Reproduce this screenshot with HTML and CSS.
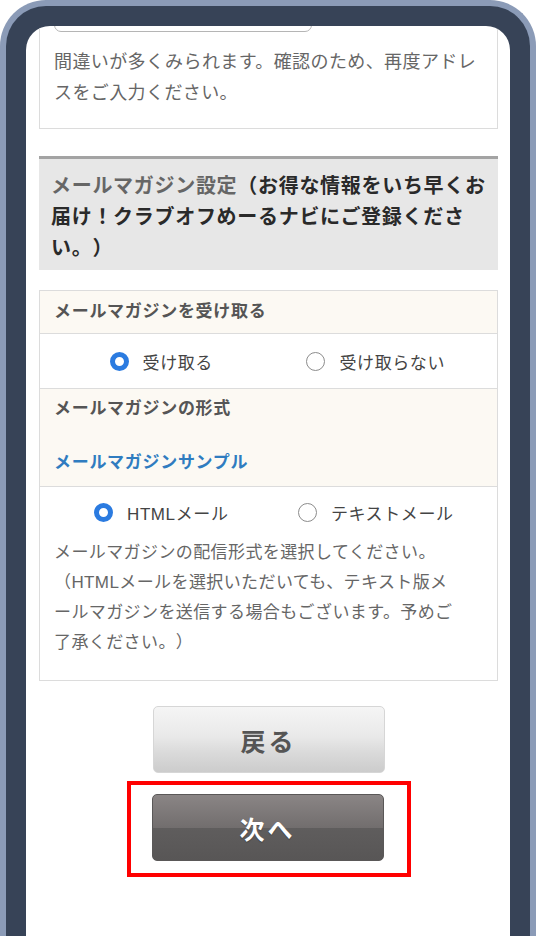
FILE: index.html
```html
<!DOCTYPE html>
<html lang="ja">
<head>
    <meta charset="UTF-8">
    <meta name="viewport" content="width=device-width, initial-scale=1.0">
    <title>メールマガジン設定</title>
    <link rel="stylesheet" href="styles.css">
</head>
<body>
    <div class="device">
        <div class="screen">
            <div class="content">

                <div class="notice">
                    <div class="field"></div>
                    <p class="notice-text">間違いが多くみられます。確認のため、再度アドレスをご入力ください。</p>
                </div>

                <h2 class="mm-head">
                    <span class="mm-title">メールマガジン設定</span><span class="mm-sub">（お得な情報をいち早くお届け！クラブオフめーるナビにご登録ください。）</span>
                </h2>

                <div class="mm-table">
                    <div class="row th">メールマガジンを受け取る</div>
                    <div class="row td options">
                        <label class="opt"><input type="radio" name="receive" checked><span>受け取る</span></label>
                        <label class="opt"><input type="radio" name="receive"><span>受け取らない</span></label>
                    </div>
                    <div class="row th th-tall">
                        <div>メールマガジンの形式</div>
                        <a class="sample" href="#">メールマガジンサンプル</a>
                    </div>
                    <div class="row td td-last">
                        <div class="options">
                            <label class="opt"><input type="radio" name="format" checked><span>HTMLメール</span></label>
                            <label class="opt"><input type="radio" name="format"><span>テキストメール</span></label>
                        </div>
                        <p class="desc">メールマガジンの配信形式を選択してください。<br>（HTMLメールを選択いただいても、テキスト版メールマガジンを送信する場合もございます。予めご了承ください。）</p>
                    </div>
                </div>

                <div class="actions">
                    <button class="btn btn-back">戻る</button>
                    <div class="highlight">
                        <button class="btn btn-next">次へ</button>
                    </div>
                </div>

            </div>
        </div>
    </div>
</body>
</html>
```

FILE: styles.css
```css
body {
    margin: 0;
    background: #fff;
    font-family: 'Liberation Sans', 'Noto Sans CJK JP', sans-serif;
    color: #666;
    text-spacing-trim: space-all;
}

.device {
    box-sizing: border-box;
    height: 936px;
    border: 6px solid #8b9bb7;
    border-bottom: none;
    border-radius: 46px 46px 0 0;
    background: #374357;
    padding: 20px 20px 0;
}

.screen {
    height: 910px;
    background: #fff;
    border-radius: 24px 24px 0 0;
    overflow: hidden;
}

.content {
    padding: 0 12px 0 13px;
}

/* top notice box (scrolled, field partly hidden) */
.notice {
    border: 1px solid #dcdcdc;
    border-top: none;
    padding: 0 14px 19px;
}

.field {
    width: 256px;
    height: 40px;
    margin-top: -36px;
    border: 1px solid #b5b5b5;
    border-radius: 0 0 7px 7px;
    background: #fff;
}

.notice-text {
    margin: 15px 0 0;
    font-size: 18px;
    letter-spacing: 0.4px;
    line-height: 31px;
}

/* section heading */
.mm-head {
    margin: 27px 0 0;
    border-top: 3px solid #a3a3a3;
    background: #e7e7e7;
    padding: 12px 8px 6px 12px;
    font-size: 20px;
    letter-spacing: 0.7px;
    line-height: 31px;
    font-weight: bold;
}

.mm-title {
    color: #666;
}

.mm-sub {
    color: #2a2a2a;
}

/* settings table */
.mm-table {
    margin-top: 20px;
    border: 1px solid #dcdcdc;
}

.row {
    padding: 0 14px;
}

.row + .row {
    border-top: 1px solid #dcdcdc;
}

.th {
    background: #fcf9f3;
    padding-top: 8px;
    padding-bottom: 8px;
    font-size: 17px;
    letter-spacing: 0.7px;
    line-height: 26px;
    font-weight: bold;
    color: #555;
}

.th-tall {
    padding-top: 6px;
    padding-bottom: 10px;
    line-height: 27px;
}

.sample {
    display: block;
    margin-top: 27px;
    color: #2f7cc0;
    text-decoration: none;
}

.options {
    display: grid;
    grid-template-columns: 1fr 1fr;
    align-items: center;
    height: 54px;
}

.td-last .options {
    height: 50px;
}

.opt {
    display: flex;
    align-items: center;
    justify-content: center;
    gap: 14px;
    font-size: 17px;
    letter-spacing: 0.6px;
    color: #444;
}

.opt input {
    appearance: none;
    -webkit-appearance: none;
    box-sizing: border-box;
    width: 19px;
    height: 19px;
    margin: 0;
    border: 1.5px solid #8c8c8c;
    border-radius: 50%;
    background: #fff;
}

.opt input:checked {
    border: 5.5px solid #2b7be0;
}

.desc {
    margin: 1px 22px 0 0;
    padding-bottom: 22px;
    font-size: 17px;
    letter-spacing: 0.4px;
    line-height: 30px;
}

/* buttons */
.actions {
    display: flex;
    flex-direction: column;
    align-items: center;
    padding-top: 25px;
}

.btn {
    width: 232px;
    height: 67px;
    border-radius: 5px;
    font-family: 'Liberation Sans', 'Noto Sans CJK JP', sans-serif;
    font-size: 25px;
    font-weight: bold;
    letter-spacing: 3px;
    cursor: pointer;
}

.btn-back {
    border: 1px solid #d6d6d6;
    background: linear-gradient(#f5f5f5, #e9e9e9 45%, #dadada 70%, #cccccc);
    color: #555;
}

.highlight {
    margin-top: 8px;
    border: 4px solid #ff0000;
    padding: 9px 23px 12px 21px;
}

.btn-next {
    display: block;
    border: 1px solid #5a5858;
    background: linear-gradient(#8a8585, #726e6e 50%, #5f5d5d 51%, #585656);
    color: #fff;
    text-shadow: 0 1px 1px rgba(0, 0, 0, 0.3);
}
```
